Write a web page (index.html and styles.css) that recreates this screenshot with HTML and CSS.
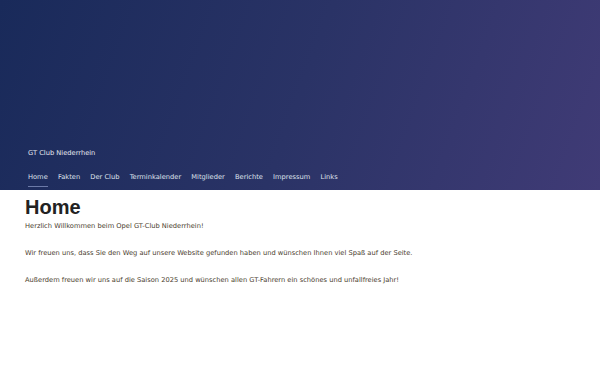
FILE: index.html
```html
<!DOCTYPE html>
<html lang="de">
<head>
  <meta charset="UTF-8">
  <meta name="viewport" content="width=device-width, initial-scale=1">
  <title>GT Club Niederrhein</title>
  <link rel="stylesheet" href="styles.css">
</head>
<body>
  <!-- Kopfbereich mit Verlauf -->
  <header class="site-header">
    <div class="brand">GT Club Niederrhein</div>
    <nav class="main-nav">
      <a href="#" class="active">Home</a>
      <a href="#">Fakten</a>
      <a href="#">Der Club</a>
      <a href="#">Terminkalender</a>
      <a href="#">Mitglieder</a>
      <a href="#">Berichte</a>
      <a href="#">Impressum</a>
      <a href="#">Links</a>
    </nav>
  </header>

  <main class="content">
    <h1>Home</h1>
    <p>Herzlich Willkommen beim Opel GT-Club Niederrhein!</p>
    <p>Wir freuen uns, dass Sie den Weg auf unsere Website gefunden haben und wünschen Ihnen viel Spaß auf der Seite.</p>
    <p>Außerdem freuen wir uns auf die Saison 2025 und wünschen allen GT-Fahrern ein schönes und unfallfreies Jahr!</p>
  </main>
</body>
</html>
```

FILE: styles.css
```css
/* Grundlayout */
body {
  margin: 0;
  font-family: 'DejaVu Sans', sans-serif;
  color: #333;
  background: #fff;
}

.site-header {
  height: 190px;
  box-sizing: border-box;
  padding: 0 28px 3px;
  display: flex;
  flex-direction: column;
  justify-content: flex-end;
  background: linear-gradient(110deg, #192a5a 0%, #2a3366 50%, #403b76 100%);
  color: #e6e8f0;
}
.brand {
  font-size: 6.7px;
  margin-bottom: 16px;
}
.main-nav {
  display: flex;
  gap: 10.2px;
}
.main-nav a {
  font-size: 6.7px;
  color: #dfe2ec;
  text-decoration: none;
  padding-bottom: 5px;
  border-bottom: 1px solid transparent;
}
.main-nav a.active {
  border-bottom-color: #6c7aa8;
}

/* Inhalt */
.content {
  padding: 0 25px;
}
.content h1 {
  font-family: 'Liberation Sans', sans-serif;
  font-size: 20px;
  font-weight: bold;
  color: #222;
  margin: 6px 0 2px;
}
.content p {
  font-size: 6.7px;
  line-height: 10px;
  margin: 0 0 17px;
  color: #4a3d2e;
}
```
